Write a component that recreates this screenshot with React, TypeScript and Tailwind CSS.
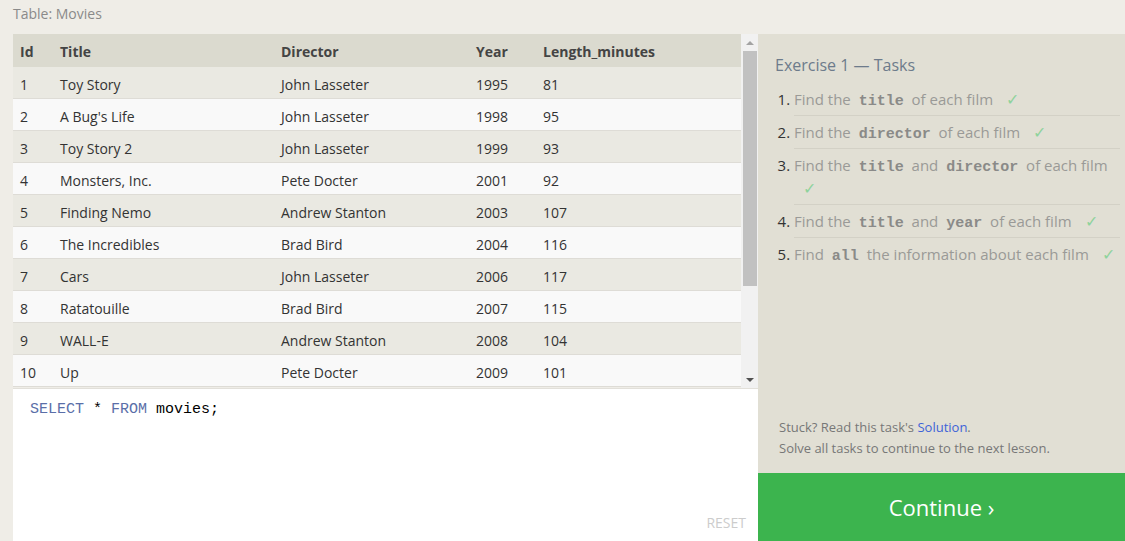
import React from "react";

type Movie = {
  id: number;
  title: string;
  director: string;
  year: number;
  length: number;
};

const movies: Movie[] = [
  { id: 1, title: "Toy Story", director: "John Lasseter", year: 1995, length: 81 },
  { id: 2, title: "A Bug's Life", director: "John Lasseter", year: 1998, length: 95 },
  { id: 3, title: "Toy Story 2", director: "John Lasseter", year: 1999, length: 93 },
  { id: 4, title: "Monsters, Inc.", director: "Pete Docter", year: 2001, length: 92 },
  { id: 5, title: "Finding Nemo", director: "Andrew Stanton", year: 2003, length: 107 },
  { id: 6, title: "The Incredibles", director: "Brad Bird", year: 2004, length: 116 },
  { id: 7, title: "Cars", director: "John Lasseter", year: 2006, length: 117 },
  { id: 8, title: "Ratatouille", director: "Brad Bird", year: 2007, length: 115 },
  { id: 9, title: "WALL-E", director: "Andrew Stanton", year: 2008, length: 104 },
  { id: 10, title: "Up", director: "Pete Docter", year: 2009, length: 101 },
];

const Code = ({ children }: { children: React.ReactNode }) => (
  <code className="px-[4px] font-bold leading-none text-[#8a8a88] text-[15px] font-['Liberation_Mono',monospace]">
    {children}
  </code>
);

const Check = () => <span className="ml-[9px] leading-none text-[16px] text-[#8fd39c]">✓</span>;

const tasks: React.ReactNode[] = [
  <>Find the <Code>title</Code> of each film <Check /></>,
  <>Find the <Code>director</Code> of each film <Check /></>,
  <>Find the <Code>title</Code> and <Code>director</Code> of each film <Check /></>,
  <>Find the <Code>title</Code> and <Code>year</Code> of each film <Check /></>,
  <>Find <Code>all</Code> the information about each film <Check /></>,
];

const MovieTable = () => (
  <div className="flex h-[354px]">
    <div className="flex-1 flex flex-col overflow-hidden">
      <div className="flex h-[33px] items-center pt-[2px] bg-[#dbdacf] font-bold text-[#444] shrink-0">
        <div className="w-[40px] pl-[7px]">Id</div>
        <div className="w-[221px] pl-[7px]">Title</div>
        <div className="w-[195px] pl-[7px]">Director</div>
        <div className="w-[67px] pl-[7px]">Year</div>
        <div className="flex-1 pl-[7px]">Length_minutes</div>
      </div>
      {movies.map((m, i) => (
        <div
          key={m.id}
          className={`flex h-8 items-center pt-[4px] border-b border-[#dedcd6] text-[#333] shrink-0 ${
            i % 2 === 0 ? "bg-[#eae9e2]" : "bg-[#f9f9f9]"
          }`}
        >
          <div className="w-[40px] pl-[7px]">{m.id}</div>
          <div className="w-[221px] pl-[7px]">{m.title}</div>
          <div className="w-[195px] pl-[7px]">{m.director}</div>
          <div className="w-[67px] pl-[7px]">{m.year}</div>
          <div className="flex-1 pl-[7px]">{m.length}</div>
        </div>
      ))}
    </div>
    {/* scrollbar */}
    <div className="w-[17px] bg-[#f1f1f1] flex flex-col items-center">
      <div className="h-[17px] flex items-center justify-center">
        <div className="w-0 h-0 border-l-[4px] border-r-[4px] border-b-[4px] border-l-transparent border-r-transparent border-b-[#a3a3a3]" />
      </div>
      <div className="w-[14px] h-[235px] bg-[#c1c1c1]" />
      <div className="flex-1" />
      <div className="h-[17px] flex items-center justify-center">
        <div className="w-0 h-0 border-l-[4px] border-r-[4px] border-t-[4px] border-l-transparent border-r-transparent border-t-[#505050]" />
      </div>
    </div>
  </div>
);

export default function App() {
  return (
    <div className="h-[541px] overflow-hidden bg-[#efede7] text-sm font-['Open_Sans',sans-serif] flex flex-col">
      <div className="h-[34px] shrink-0 pl-[13px] pt-[4px] text-[#8a8a8a]">Table: Movies</div>
      <div className="flex flex-1 min-h-0 pl-[13px]">
        <div className="w-[745px] flex flex-col">
          <MovieTable />
          <div className="flex-1 bg-white border-t border-[#e2e0da] flex flex-col pl-[17px] pr-4 pt-[10px] pb-[8px]">
            <div className="text-[15px] font-['Liberation_Mono',monospace] text-black">
              <span className="text-[#5a6ea8]">SELECT</span> * <span className="text-[#5a6ea8]">FROM</span> movies;
            </div>
            <div className="flex-1" />
            <div className="self-end text-[14px] text-[#cccccc] mr-[-4px]">RESET</div>
          </div>
        </div>
        <div className="flex-1 bg-[#e1dfd4] flex flex-col">
          <div className="pl-[17px] pr-[5px] pt-[19px] flex-1 flex flex-col">
            <div className="text-base leading-6 text-[#6d7b8b]">Exercise 1 — Tasks</div>
            <ol className="mt-[6px] list-decimal pl-[19px] text-[15px] text-[#9a9a97] marker:text-[#333]">
              {tasks.map((t, i) => (
                <li
                  key={i}
                  className={`pt-[5px] pb-[4px] leading-[23px] ${
                    i < tasks.length - 1 ? "border-b border-[#d3d1c6]" : ""
                  }`}
                >
                  {t}
                </li>
              ))}
            </ol>
            <div className="flex-1" />
            <div className="pl-[4px] pb-[14px] text-[13px] leading-[21px] text-[#777]">
              <div>
                Stuck? Read this task's <span className="text-[#3e63d8]">Solution</span>.
              </div>
              <div>Solve all tasks to continue to the next lesson.</div>
            </div>
          </div>
          <div className="h-[68px] shrink-0 bg-[#3cb44e] text-white text-[22px] pt-[2px] flex items-center justify-center">
            Continue ›
          </div>
        </div>
      </div>
    </div>
  );
}
